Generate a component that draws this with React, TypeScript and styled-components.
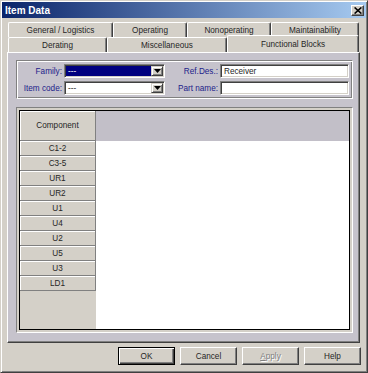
import styled, { createGlobalStyle, css } from 'styled-components';

const GlobalStyle = createGlobalStyle`
  html, body {
    margin: 0;
    padding: 0;
    background: #d4d0c8;
  }
  body {
    font-family: "Liberation Sans", Arial, sans-serif;
    font-size: 8.2px;
    color: #262626;
  }
  * {
    box-sizing: border-box;
  }
`;

const PANEL = '#c6c3cc';

const backTabs = [
  { label: 'General / Logistics', w: 105 },
  { label: 'Operating', w: 74 },
  { label: 'Nonoperating', w: 84 },
  { label: 'Maintainability', w: 88 },
];

const frontTabs = [
  { label: 'Derating', w: 99 },
  { label: 'Miscellaneous', w: 120 },
  { label: 'Functional Blocks', w: 132, active: true },
];

const components = ['C1-2', 'C3-5', 'UR1', 'UR2', 'U1', 'U4', 'U2', 'U5', 'U3', 'LD1'];

function App() {
  return (
    <>
      <GlobalStyle />
      <Window>
        <TitleBar>
          <Title>Item Data</Title>
          <CloseButton>
            <svg width="8" height="7" viewBox="0 0 8 7">
              <path d="M0.6 0.4 L7.4 6.6 M7.4 0.4 L0.6 6.6" stroke="#000" strokeWidth="1.5" />
            </svg>
          </CloseButton>
        </TitleBar>

        <Body>
          <TabRow>
            {backTabs.map((t) => (
              <Tab key={t.label} $w={t.w}>
                {t.label}
              </Tab>
            ))}
          </TabRow>
          <TabRow>
            {frontTabs.map((t) => (
              <Tab key={t.label} $w={t.w} $active={t.active}>
                {t.label}
              </Tab>
            ))}
          </TabRow>

          <Panel>
            <GroupBox>
              <Label>Family:</Label>
              <Combo>
                <ComboValue $focused>---</ComboValue>
                <DropButton>
                  <svg width="7" height="4" viewBox="0 0 7 4">
                    <path d="M0 0 H7 L3.5 4 Z" fill="#000" />
                  </svg>
                </DropButton>
              </Combo>
              <Label>Ref.Des.:</Label>
              <TextInput>Receiver</TextInput>

              <Label>Item code:</Label>
              <Combo>
                <ComboValue>---</ComboValue>
                <DropButton>
                  <svg width="7" height="4" viewBox="0 0 7 4">
                    <path d="M0 0 H7 L3.5 4 Z" fill="#000" />
                  </svg>
                </DropButton>
              </Combo>
              <Label>Part name:</Label>
              <TextInput />
            </GroupBox>

            <GridFrame>
              <GridInner>
                <LeftColumn>
                  <HeaderCell>Component</HeaderCell>
                  {components.map((c) => (
                    <RowCell key={c}>{c}</RowCell>
                  ))}
                </LeftColumn>
                <RightColumn>
                  <HeaderFill />
                  <GridBody />
                </RightColumn>
              </GridInner>
            </GridFrame>
          </Panel>

          <ButtonRow>
            <Button $default>OK</Button>
            <Button>Cancel</Button>
            <Button disabled>
              <u>A</u>pply
            </Button>
            <Button>Help</Button>
          </ButtonRow>
        </Body>
      </Window>
    </>
  );
}

export default App;

const Window = styled.div`
  width: 368px;
  height: 373px;
  background: #d4d0c8;
  border: 1px solid;
  border-color: #d4d0c8 #404040 #404040 #d4d0c8;
  box-shadow: inset 1px 1px 0 #fff, inset -1px -1px 0 #808080;
  padding: 1px;
  display: flex;
  flex-direction: column;
`;

const TitleBar = styled.div`
  height: 16px;
  flex: none;
  background: linear-gradient(to right, #0a246a, #a6caf0);
  display: flex;
  align-items: center;
  justify-content: space-between;
  padding: 0 2px 0 3px;
`;

const Title = styled.span`
  color: #fff;
  font-weight: bold;
  font-size: 10px;
`;

const CloseButton = styled.div`
  width: 13px;
  height: 11px;
  background: #d4d0c8;
  border: 1px solid;
  border-color: #fff #404040 #404040 #fff;
  box-shadow: inset -1px -1px 0 #808080;
  display: flex;
  align-items: center;
  justify-content: center;
`;

const Body = styled.div`
  display: flex;
  flex-direction: column;
  padding: 4px 6px 0 5px;
`;

const TabRow = styled.div`
  display: flex;
  padding: 0 1px;
  height: 15px;
`;

const Tab = styled.div<{ $w: number; $active?: boolean }>`
  width: ${(p) => p.$w}px;
  height: 15px;
  display: flex;
  align-items: center;
  justify-content: center;
  padding-top: 1px;
  border-top: 1px solid #fff;
  border-left: 1px solid #fff;
  border-right: 1px solid #404040;
  box-shadow: inset -1px 0 0 #808080;
  border-radius: 2px 2px 0 0;
  white-space: nowrap;

  ${(p) =>
    p.$active &&
    css`
      position: relative;
      z-index: 1;
      height: 17px;
      margin-top: -2px;
      background: #d4d0c8;
    `}
`;

const Panel = styled.div`
  height: 291px;
  flex: none;
  background: ${PANEL};
  border: 1px solid;
  border-color: #fff #404040 #404040 #fff;
  box-shadow: inset -1px -1px 0 #808080;
  padding: 7px 6px 0 8px;
  display: flex;
  flex-direction: column;
`;

const GroupBox = styled.div`
  height: 39px;
  flex: none;
  border: 1px solid;
  border-color: #808080 #fff #fff #808080;
  box-shadow: inset 1px 1px 0 #fff, inset -1px -1px 0 #808080;
  padding: 3px 0 0 0;
  display: grid;
  grid-template-columns: 45px 101px 51px 129px;
  grid-template-rows: 14px 14px;
  column-gap: 2px;
  row-gap: 3px;
`;

const Label = styled.div`
  color: #22228a;
  text-align: right;
  align-self: center;
  white-space: nowrap;
`;

const sunken = css`
  border: 1px solid;
  border-color: #808080 #fff #fff #808080;
  box-shadow: inset 1px 1px 0 #404040, inset -1px -1px 0 #d4d0c8;
`;

const Combo = styled.div`
  ${sunken};
  height: 14px;
  display: flex;
  padding: 1px;
  background: #fff;
`;

const ComboValue = styled.div<{ $focused?: boolean }>`
  flex: 1;
  background: ${(p) => (p.$focused ? '#000080' : 'transparent')};
  color: ${(p) => (p.$focused ? '#fff' : '#262626')};
  padding-left: 2px;
  display: flex;
  align-items: center;
`;

const DropButton = styled.div`
  width: 12px;
  flex: none;
  background: #d4d0c8;
  border: 1px solid;
  border-color: #d4d0c8 #404040 #404040 #d4d0c8;
  box-shadow: inset 1px 1px 0 #fff, inset -1px -1px 0 #808080;
  display: flex;
  align-items: center;
  justify-content: center;
`;

const TextInput = styled.div`
  ${sunken};
  height: 14px;
  background: #fff;
  padding-left: 3px;
  display: flex;
  align-items: center;
`;

const GridFrame = styled.div`
  margin-top: 8px;
  width: 337px;
  height: 226px;
  flex: none;
  border: 1px solid;
  border-color: #808080 #fff #fff #808080;
  padding: 2px;
  background: #d4d0c8;
`;

const GridInner = styled.div`
  height: 100%;
  border: 1px solid #000;
  display: flex;
`;

const LeftColumn = styled.div`
  width: 76px;
  flex: none;
  background: #d4d0c8;
  display: flex;
  flex-direction: column;
`;

const cell = css`
  flex: none;
  display: flex;
  align-items: center;
  justify-content: center;
  border-right: 1px solid #808080;
  border-bottom: 1px solid #808080;
  box-shadow: inset 1px 1px 0 #fff;
`;

const HeaderCell = styled.div`
  ${cell};
  height: 30px;
`;

const RowCell = styled.div`
  ${cell};
  height: 15px;
`;

const RightColumn = styled.div`
  flex: 1;
  display: flex;
  flex-direction: column;
`;

const HeaderFill = styled.div`
  height: 30px;
  flex: none;
  background: #c2bfc8;
`;

const GridBody = styled.div`
  flex: 1;
  background: #fff;
`;

const ButtonRow = styled.div`
  display: flex;
  justify-content: flex-end;
  gap: 5px;
  margin-top: 4px;
  margin-right: -1px;
`;

const Button = styled.button<{ $default?: boolean }>`
  width: 57px;
  height: 18px;
  padding: 0;
  font: inherit;
  background: #d4d0c8;
  color: #262626;
  border: 1px solid;
  border-color: #fff #404040 #404040 #fff;
  box-shadow: inset -1px -1px 0 #808080;

  ${(p) =>
    p.$default &&
    css`
      border-color: #000;
      box-shadow: inset 1px 1px 0 #fff, inset -1px -1px 0 #404040, inset -2px -2px 0 #808080;
    `}

  &:disabled {
    color: #808080;
    text-shadow: 1px 1px 0 #fff;
  }
`;
